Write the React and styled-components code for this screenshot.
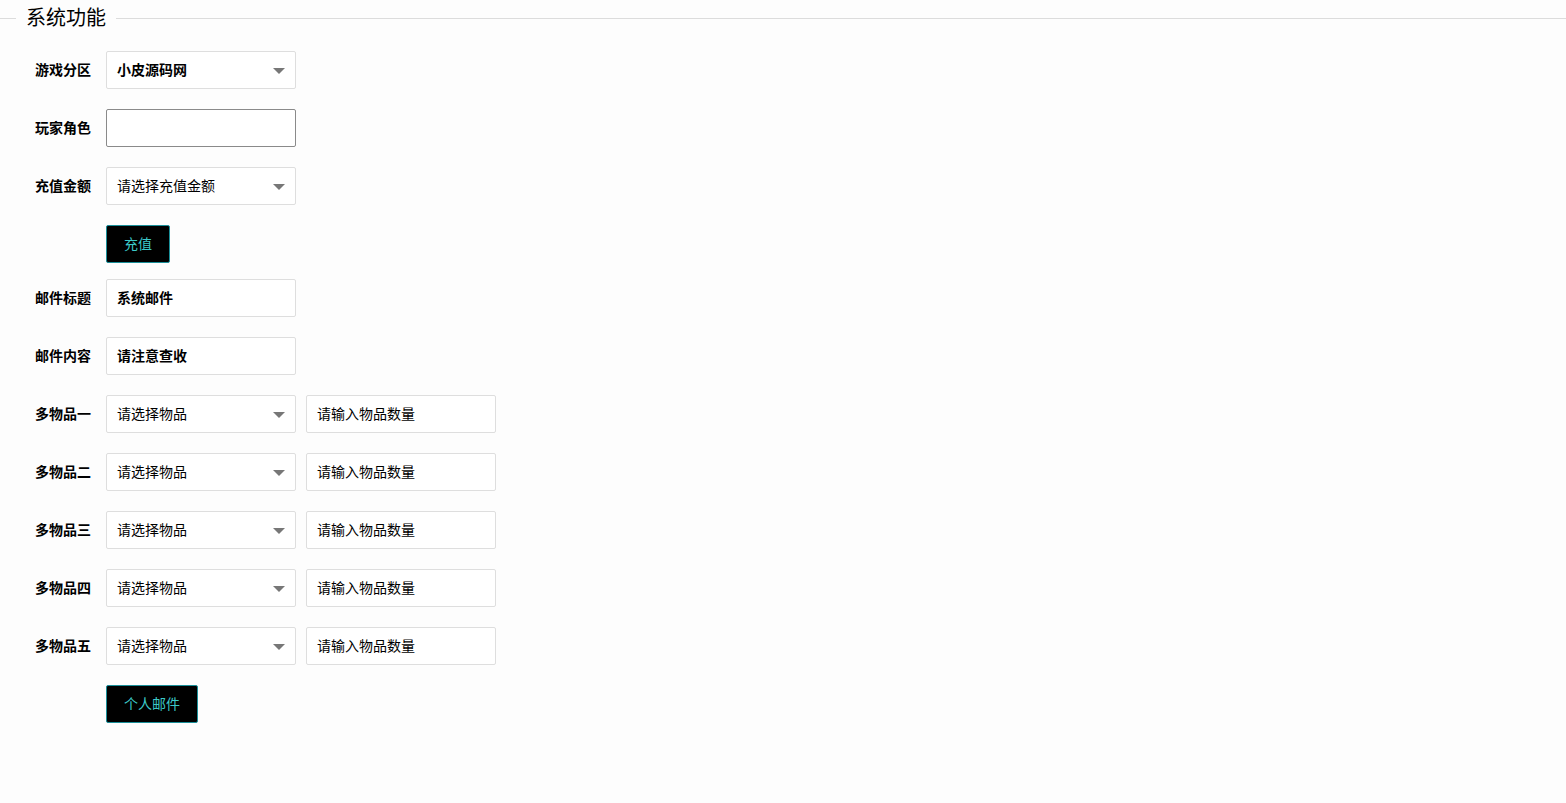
import React from "react";
import styled, { createGlobalStyle } from "styled-components";

const Global = createGlobalStyle`
	html, body {
		margin: 0;
		padding: 0;
		background: #fdfdfd;
		font-family: "Liberation Sans", "Noto Sans CJK SC", sans-serif;
		color: #000;
	}
`;

const Fieldset = styled.fieldset`
	margin: 0;
	padding: 0;
	border: none;
	border-top: 1px solid #dcdcdc;
	min-width: 0;
`;

const Legend = styled.legend`
	margin-left: 16px;
	padding: 0 10px;
	font-size: 20px;
	font-weight: 400;
	line-height: 36px;
	color: #000;
`;

const Form = styled.div`
	padding-top: 15px;
	display: flex;
	flex-direction: column;
`;

const Row = styled.div`
	display: flex;
	align-items: center;
	gap: 10px;
	margin-bottom: ${(p) => p.gap ?? 20}px;
`;

const Label = styled.label`
	width: 106px;
	margin-right: -10px;
	box-sizing: border-box;
	padding: 0 15px 2px 0;
	text-align: right;
	font-size: 14px;
	font-weight: bold;
`;

const Field = styled.div`
	position: relative;
	width: 190px;
	height: 38px;
	box-sizing: border-box;
	border: 1px solid ${(p) => (p.active ? "#8a8a8a" : "#dedede")};
	border-radius: 2px;
	background: #fff;
	display: flex;
	align-items: center;
	padding: 0 0 2px 10px;
	font-size: 14px;
	font-weight: ${(p) => (p.bold ? "bold" : "normal")};
	color: #000;
`;

const Arrow = styled.i`
	position: absolute;
	right: 10px;
	top: 16px;
	width: 0;
	height: 0;
	border-style: solid;
	border-width: 6px 6px 0 6px;
	border-color: #777 transparent transparent transparent;
`;

const Button = styled.button`
	margin-left: 106px;
	height: 38px;
	padding: 0 17px 2px;
	background: #000;
	color: #3cc9c9;
	border: 1px solid #1a8f99;
	border-radius: 2px;
	font-size: 14px;
	font-family: inherit;
`;

const Select = ({ children, bold }) => (
	<Field bold={bold}>
		{children}
		<Arrow />
	</Field>
);

const items = ["一", "二", "三", "四", "五"];

export default function App() {
	return (
		<>
			<Global />
			<Fieldset>
				<Legend>系统功能</Legend>
				<Form>
					<Row>
						<Label>游戏分区</Label>
						<Select bold>小皮源码网</Select>
					</Row>
					<Row>
						<Label>玩家角色</Label>
						<Field active />
					</Row>
					<Row>
						<Label>充值金额</Label>
						<Select>请选择充值金额</Select>
					</Row>
					<Row gap={16}>
						<Button>充值</Button>
					</Row>
					<Row>
						<Label>邮件标题</Label>
						<Field bold>系统邮件</Field>
					</Row>
					<Row>
						<Label>邮件内容</Label>
						<Field bold>请注意查收</Field>
					</Row>
					{items.map((n) => (
						<Row key={n}>
							<Label>多物品{n}</Label>
							<Select>请选择物品</Select>
							<Field>请输入物品数量</Field>
						</Row>
					))}
					<Row>
						<Button>个人邮件</Button>
					</Row>
				</Form>
			</Fieldset>
		</>
	);
}
